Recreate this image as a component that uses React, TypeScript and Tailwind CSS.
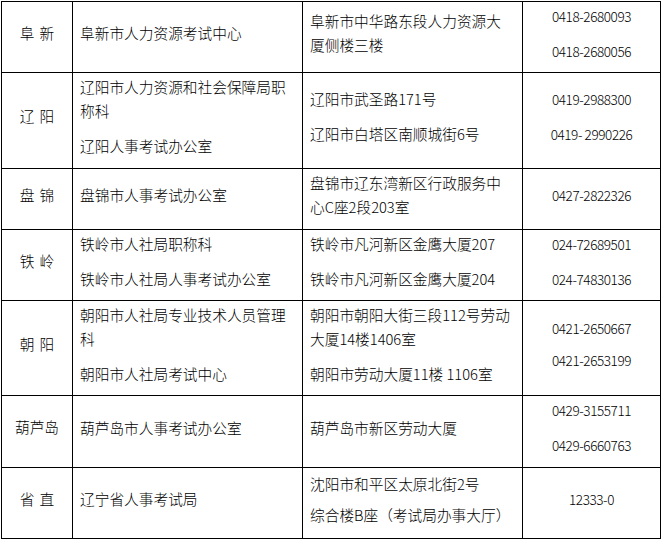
type Para = string[]

type Row = {
  h: string
  city: string
  org: Para[]
  addr: Para[]
  tel: string[]
  addrGap?: string
  telGap?: string
}

const rows: Row[] = [
  {
    h: 'h-[71px]',
    city: '阜 新',
    org: [['阜新市人力资源考试中心']],
    addr: [['阜新市中华路东段人力资源大', '厦侧楼三楼']],
    tel: ['0418-2680093', '0418-2680056'],
  },
  {
    h: 'h-[96px]',
    city: '辽 阳',
    org: [['辽阳市人力资源和社会保障局职', '称科'], ['辽阳人事考试办公室']],
    addr: [['辽阳市武圣路171号'], ['辽阳市白塔区南顺城街6号']],
    tel: ['0419-2988300', '0419- 2990226'],
  },
  {
    h: 'h-[61px]',
    city: '盘 锦',
    org: [['盘锦市人事考试办公室']],
    addr: [['盘锦市辽东湾新区行政服务中', '心C座2段203室']],
    tel: ['0427-2822326'],
  },
  {
    h: 'h-[71px]',
    city: '铁 岭',
    org: [['铁岭市人社局职称科'], ['铁岭市人社局人事考试办公室']],
    addr: [['铁岭市凡河新区金鹰大厦207'], ['铁岭市凡河新区金鹰大厦204']],
    tel: ['024-72689501', '024-74830136'],
  },
  {
    h: 'h-[95px]',
    city: '朝 阳',
    org: [['朝阳市人社局专业技术人员管理', '科'], ['朝阳市人社局考试中心']],
    addr: [['朝阳市朝阳大街三段112号劳动', '大厦14楼1406室'], ['朝阳市劳动大厦11楼 1106室']],
    tel: ['0421-2650667', '0421-2653199'],
    telGap: 'gap-[8px]',
  },
  {
    h: 'h-[72px]',
    city: '葫芦岛',
    org: [['葫芦岛市人事考试办公室']],
    addr: [['葫芦岛市新区劳动大厦']],
    tel: ['0429-3155711', '0429-6660763'],
  },
  {
    h: 'h-[71px]',
    city: '省 直',
    org: [['辽宁省人事考试局']],
    addr: [['沈阳市和平区太原北街2号'], ['综合楼B座（考试局办事大厅）']],
    tel: ['12333-0'],
    addrGap: 'gap-[7px]',
  },
]

function Paras({ paras }: { paras: Para[] }) {
  return (
    <>
      {paras.map((p, i) => (
        <div key={i}>
          {p.map((line, j) => (
            <div key={j} className="whitespace-pre leading-[24px]">
              {line}
            </div>
          ))}
        </div>
      ))}
    </>
  )
}

export default function App() {
  return (
    <div className="h-[542px] w-[662px] bg-white pl-[1px] pt-[1px] text-[14.7px] font-light text-black [font-family:'Noto_Sans_CJK_SC',sans-serif]">
      <div className="grid w-[660px] grid-cols-[71px_230px_220px_138px] border-l border-t border-black">
        {rows.map((r) => (
          <div key={r.city} className="contents">
            <div className={`${r.h} flex flex-col items-center justify-center border-b border-r border-black pb-2`}>
              <span className="whitespace-pre [word-spacing:2px]">{r.city}</span>
            </div>
            <div className={`${r.h} flex flex-col justify-center gap-[11px] border-b border-r border-black pb-2 pl-[7px]`}>
              <Paras paras={r.org} />
            </div>
            <div className={`${r.h} flex flex-col justify-center ${r.addrGap ?? 'gap-[11px]'} border-b border-r border-black pb-2 pl-[7px]`}>
              <Paras paras={r.addr} />
            </div>
            <div className={`${r.h} flex flex-col items-center justify-center ${r.telGap ?? 'gap-[11px]'} border-b border-r border-black pb-2 text-[13.5px] tracking-[-0.4px]`}>
              {r.tel.map((t) => (
                <div key={t} className="whitespace-pre leading-[24px]">
                  {t}
                </div>
              ))}
            </div>
          </div>
        ))}
      </div>
    </div>
  )
}
